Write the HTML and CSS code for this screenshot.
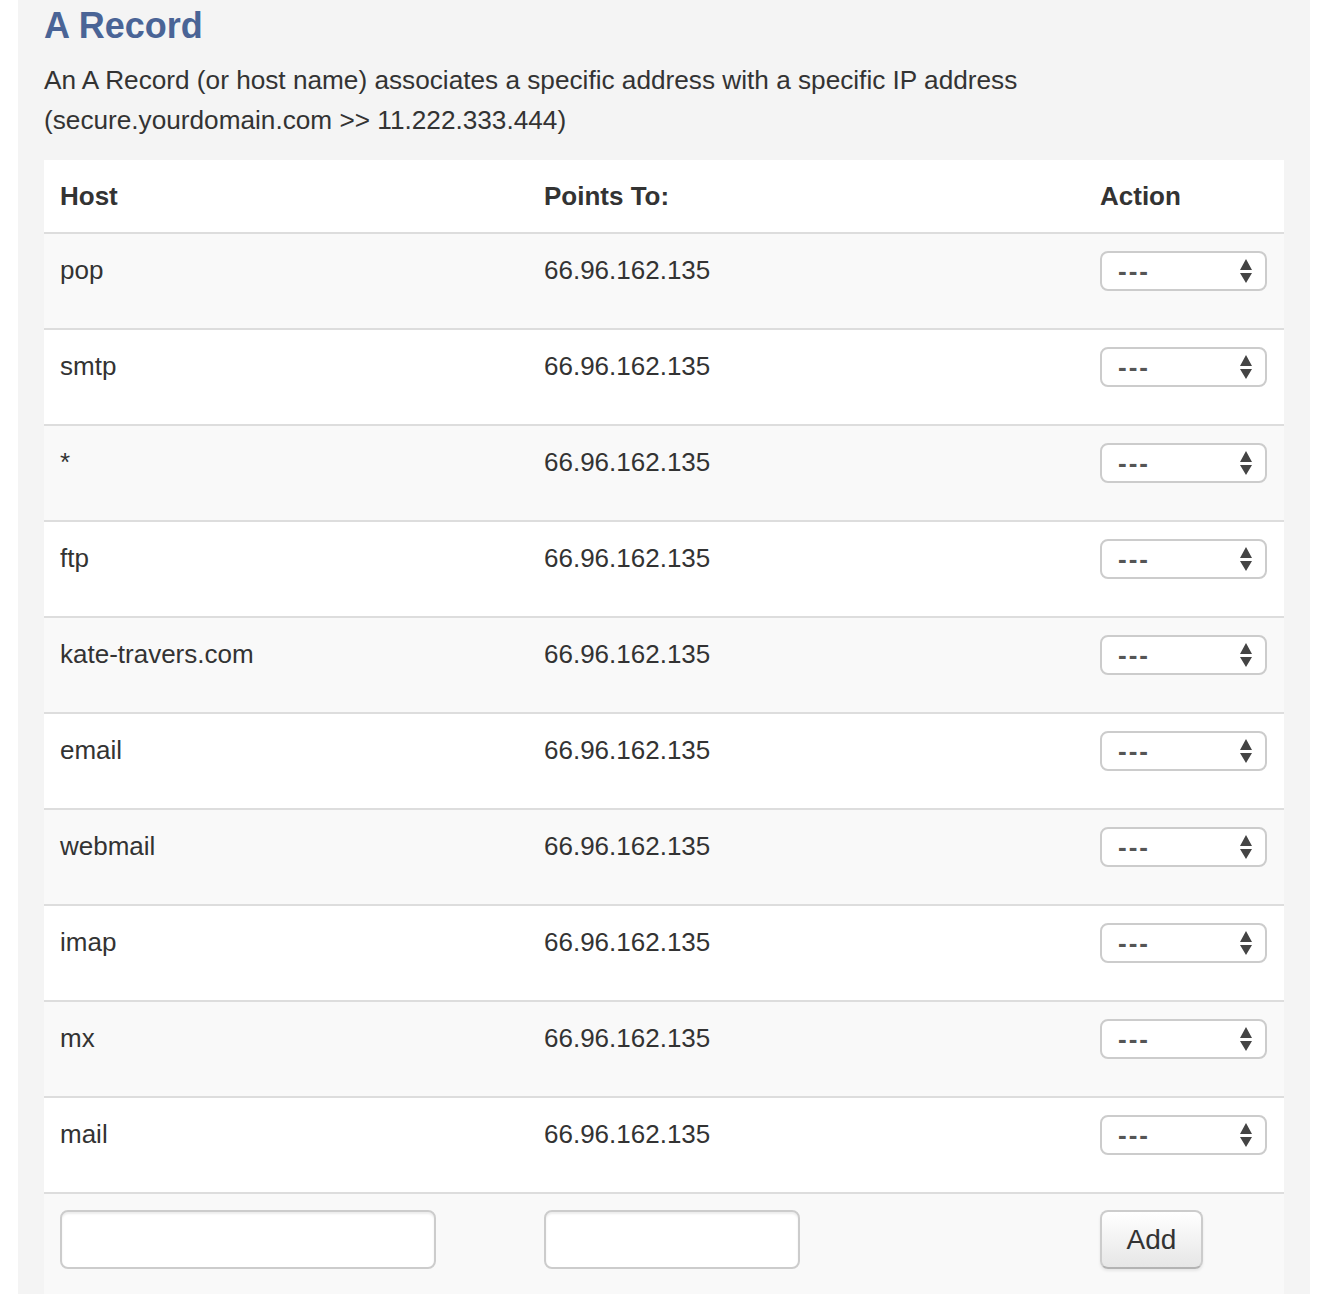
FILE: index.html
```html
<!DOCTYPE html>
<html>
<head>
<meta charset="utf-8">
<link rel="stylesheet" href="styles.css">
</head>
<body>
<div class="panel">
  <h3 class="title">A Record</h3>
  <p class="desc">An A Record (or host name) associates a specific address with a specific IP address<br>(secure.yourdomain.com &gt;&gt; 11.222.333.444)</p>
  <table class="records">
    <thead>
      <tr><th class="c-host">Host</th><th class="c-points">Points To:</th><th class="c-action">Action</th></tr>
    </thead>
    <tbody>
      <tr><td>pop</td><td>66.96.162.135</td><td><div class="sel"><span>---</span><svg width="14" height="26" viewBox="0 0 14 26"><path d="M7 1 L13 12 L1 12 Z M1 15 L13 15 L7 25 Z" fill="#444"/></svg></div></td></tr>
      <tr><td>smtp</td><td>66.96.162.135</td><td><div class="sel"><span>---</span><svg width="14" height="26" viewBox="0 0 14 26"><path d="M7 1 L13 12 L1 12 Z M1 15 L13 15 L7 25 Z" fill="#444"/></svg></div></td></tr>
      <tr><td>*</td><td>66.96.162.135</td><td><div class="sel"><span>---</span><svg width="14" height="26" viewBox="0 0 14 26"><path d="M7 1 L13 12 L1 12 Z M1 15 L13 15 L7 25 Z" fill="#444"/></svg></div></td></tr>
      <tr><td>ftp</td><td>66.96.162.135</td><td><div class="sel"><span>---</span><svg width="14" height="26" viewBox="0 0 14 26"><path d="M7 1 L13 12 L1 12 Z M1 15 L13 15 L7 25 Z" fill="#444"/></svg></div></td></tr>
      <tr><td>kate-travers.com</td><td>66.96.162.135</td><td><div class="sel"><span>---</span><svg width="14" height="26" viewBox="0 0 14 26"><path d="M7 1 L13 12 L1 12 Z M1 15 L13 15 L7 25 Z" fill="#444"/></svg></div></td></tr>
      <tr><td>email</td><td>66.96.162.135</td><td><div class="sel"><span>---</span><svg width="14" height="26" viewBox="0 0 14 26"><path d="M7 1 L13 12 L1 12 Z M1 15 L13 15 L7 25 Z" fill="#444"/></svg></div></td></tr>
      <tr><td>webmail</td><td>66.96.162.135</td><td><div class="sel"><span>---</span><svg width="14" height="26" viewBox="0 0 14 26"><path d="M7 1 L13 12 L1 12 Z M1 15 L13 15 L7 25 Z" fill="#444"/></svg></div></td></tr>
      <tr><td>imap</td><td>66.96.162.135</td><td><div class="sel"><span>---</span><svg width="14" height="26" viewBox="0 0 14 26"><path d="M7 1 L13 12 L1 12 Z M1 15 L13 15 L7 25 Z" fill="#444"/></svg></div></td></tr>
      <tr><td>mx</td><td>66.96.162.135</td><td><div class="sel"><span>---</span><svg width="14" height="26" viewBox="0 0 14 26"><path d="M7 1 L13 12 L1 12 Z M1 15 L13 15 L7 25 Z" fill="#444"/></svg></div></td></tr>
      <tr><td>mail</td><td>66.96.162.135</td><td><div class="sel"><span>---</span><svg width="14" height="26" viewBox="0 0 14 26"><path d="M7 1 L13 12 L1 12 Z M1 15 L13 15 L7 25 Z" fill="#444"/></svg></div></td></tr>
      <tr class="add-row"><td><input class="inp inp-host" type="text"></td><td><input class="inp inp-points" type="text"></td><td><button class="btn" type="button">Add</button></td></tr>
    </tbody>
  </table>
</div>
</body>
</html>
```
FILE: styles.css
```css
html, body {
  margin: 0;
  padding: 0;
  background: #fff;
}
body {
  font-family: "Liberation Sans", Arial, Helvetica, sans-serif;
  color: #333;
  font-size: 26px;
  line-height: 40px;
}
.panel {
  margin-left: 18px;
  width: 1292px;
  box-sizing: border-box;
  background: #f4f4f4;
  padding: 6px 26px 40px 26px;
}
.title {
  margin: 0;
  font-size: 36px;
  line-height: 40px;
  font-weight: bold;
  color: #4a6496;
}
.desc {
  margin: 14px 0 20px 0;
  font-size: 26.2px;
}
.records {
  width: 1240px;
  border-collapse: collapse;
  border-spacing: 0;
  background: #fff;
  table-layout: fixed;
}
.c-host { width: 452px; }
.c-points { width: 524px; }
.c-action { width: 168px; }
.records th {
  text-align: left;
  font-weight: bold;
  padding: 16px 16px;
  line-height: 40px;
  vertical-align: top;
}
.records td {
  padding: 16px 16px 17px 16px;
  line-height: 40px;
  vertical-align: top;
  border-top: 2px solid #ddd;
}
.records tbody tr:nth-child(odd) td {
  background: #f9f9f9;
}
.sel {
  box-sizing: border-box;
  width: 167px;
  height: 40px;
  margin: 1px 0 20px 0;
  border: 2px solid #ccc;
  border-radius: 8px;
  background: #fff;
  display: flex;
  align-items: center;
  justify-content: space-between;
  padding: 0 12px 0 16px;
  color: #555;
  font-size: 26px;
  font-weight: bold;
}
.sel span {
  letter-spacing: 2px;
  line-height: 36px;
}
.sel svg {
  display: block;
}
.records .add-row td {
  padding-top: 16px;
  padding-bottom: 40px;
}
.inp {
  display: block;
  box-sizing: border-box;
  height: 59px;
  margin: 0;
  border: 2px solid #ccc;
  border-radius: 8px;
  background: #fff;
  box-shadow: inset 0 2px 2px rgba(0,0,0,0.075);
  font-family: inherit;
  font-size: 26px;
  padding: 0 10px;
}
.inp-host { width: 376px; }
.inp-points { width: 256px; }
.btn {
  display: block;
  box-sizing: border-box;
  width: 103px;
  height: 59px;
  border: 2px solid #ccc;
  border-bottom-color: #b3b3b3;
  border-radius: 8px;
  background: linear-gradient(to bottom, #ffffff, #e6e6e6);
  box-shadow: inset 0 2px 0 rgba(255,255,255,0.2), 0 2px 3px rgba(0,0,0,0.08);
  font-family: inherit;
  font-size: 28px;
  color: #333;
  padding: 0;
  margin: 0;
}
```
